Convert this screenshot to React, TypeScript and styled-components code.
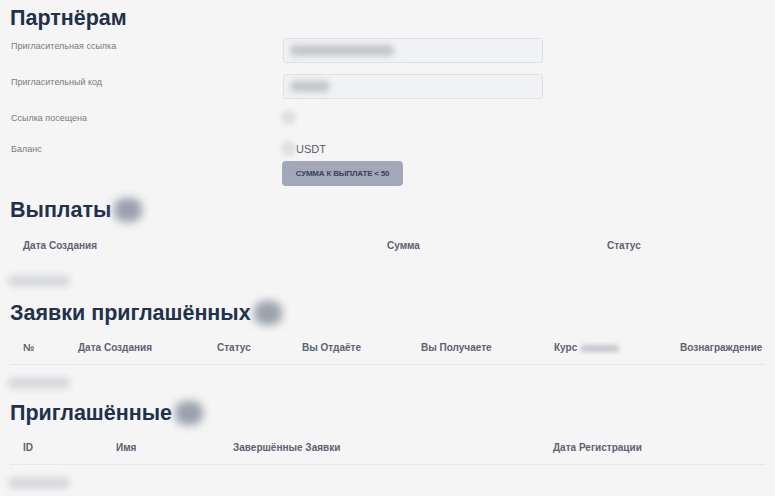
import React from "react";
import styled, { createGlobalStyle } from "styled-components";

const Global = createGlobalStyle`
  html, body {
    margin: 0;
    padding: 0;
    background: #f5f5f5;
    font-family: "Liberation Sans", Arial, sans-serif;
  }
`;

const Page = styled.div`
  padding: 5px 10px 0 10px;
  box-sizing: border-box;
  width: 775px;
  height: 496px;
  overflow: hidden;
`;

const Title = styled.h2<{ $mt?: number }>`
  margin: ${(p) => p.$mt ?? 0}px 0 0 0;
  font-size: 21.5px;
  line-height: 26px;
  font-weight: 700;
  color: #1f3249;
  display: flex;
  align-items: center;
  gap: 3px;
`;

const CountBadge = styled.span`
  display: inline-block;
  width: 28px;
  height: 24px;
  border-radius: 10px;
  background: #9ba1ad;
  filter: blur(4px);
`;

const Form = styled.div`
  display: flex;
  flex-direction: column;
  margin-top: 7px;
`;

const FormRow = styled.div<{ $h: number; $mt: number }>`
  display: flex;
  align-items: flex-start;
  height: ${(p) => p.$h}px;
  margin-top: ${(p) => p.$mt}px;
`;

const Label = styled.div`
  width: 270px;
  padding: 2px 0 0 1px;
  font-size: 9px;
  line-height: 12px;
  color: #7a7a7a;
`;

const Field = styled.div<{ $w: number }>`
  box-sizing: border-box;
  width: 260px;
  height: 25px;
  margin-left: 2px;
  border: 1px solid #dfe1e5;
  border-radius: 3px;
  background: #f1f2f4;
  display: flex;
  align-items: center;
  padding-left: 6px;

  &::before {
    content: "";
    display: block;
    width: ${(p) => p.$w}px;
    height: 11px;
    border-radius: 5px;
    background: #c3c5ca;
    filter: blur(3px);
  }
`;

const Dot = styled.span`
  display: inline-block;
  width: 15px;
  height: 15px;
  border-radius: 50%;
  background: #e0e0e0;
  filter: blur(2.5px);
`;

const Balance = styled.div`
  display: flex;
  align-items: center;
  font-size: 11px;
  line-height: 14px;
  color: #555a66;
`;

const PayButton = styled.button`
  margin: 6px 0 0 272px;
  width: 121px;
  height: 25px;
  border: none;
  border-radius: 4px;
  background: #a3a8b8;
  color: #3a4256;
  font-family: "Liberation Sans", Arial, sans-serif;
  font-size: 8px;
  font-weight: 700;
  letter-spacing: -0.2px;
  padding: 0;
  text-transform: uppercase;
`;

const Table = styled.div<{ $mt: number }>`
  margin-top: ${(p) => p.$mt}px;
`;

const HeadRow = styled.div<{ $cols: string; $divided?: boolean }>`
  display: grid;
  grid-template-columns: ${(p) => p.$cols};
  border-bottom: 1px solid ${(p) => (p.$divided ? "#e9e9ec" : "transparent")};
`;

const Th = styled.div`
  padding: 10px 13px;
  font-size: 10px;
  line-height: 12px;
  font-weight: 700;
  color: #5e6171;
  white-space: nowrap;
  display: flex;
  align-items: center;
  gap: 4px;
`;

const HiddenWord = styled.span`
  display: inline-block;
  width: 38px;
  height: 7px;
  border-radius: 3px;
  background: #c4c6cc;
  filter: blur(2px);
`;

const EmptyRow = styled.div`
  margin: 12px 0 0 -2px;
  width: 62px;
  height: 12px;
  border-radius: 6px;
  background: #d8d9dc;
  filter: blur(3px);
`;

export default function App() {
  return (
    <>
      <Global />
      <Page>
        <Title>Партнёрам</Title>
        <Form>
          <FormRow $h={25} $mt={0}>
            <Label>Пригласительная ссылка</Label>
            <Field $w={104} />
          </FormRow>
          <FormRow $h={25} $mt={11}>
            <Label>Пригласительный код</Label>
            <Field $w={40} />
          </FormRow>
          <FormRow $h={20} $mt={11}>
            <Label>Ссылка посещена</Label>
            <Dot />
          </FormRow>
          <FormRow $h={14} $mt={11}>
            <Label>Баланс</Label>
            <Balance>
              <Dot />
              USDT
            </Balance>
          </FormRow>
          <PayButton>Сумма к выплате &lt; 50</PayButton>
        </Form>

        <Title $mt={11}>
          Выплаты
          <CountBadge />
        </Title>
        <Table $mt={7}>
          <HeadRow $cols="364px 220px 1fr">
            <Th>Дата Создания</Th>
            <Th>Сумма</Th>
            <Th>Статус</Th>
          </HeadRow>
          <EmptyRow />
        </Table>

        <Title $mt={13}>
          Заявки приглашённых
          <CountBadge />
        </Title>
        <Table $mt={6}>
          <HeadRow $cols="55px 139px 85px 119px 133px 126px 1fr" $divided>
            <Th>№</Th>
            <Th>Дата Создания</Th>
            <Th>Статус</Th>
            <Th>Вы Отдаёте</Th>
            <Th>Вы Получаете</Th>
            <Th>
              Курс <HiddenWord />
            </Th>
            <Th>Вознаграждение</Th>
          </HeadRow>
          <EmptyRow />
        </Table>

        <Title $mt={11}>
          Приглашённые
          <CountBadge />
        </Title>
        <Table $mt={6}>
          <HeadRow $cols="93px 117px 320px 1fr" $divided>
            <Th>ID</Th>
            <Th>Имя</Th>
            <Th>Завершённые Заявки</Th>
            <Th>Дата Регистрации</Th>
          </HeadRow>
          <EmptyRow />
        </Table>
      </Page>
    </>
  );
}
